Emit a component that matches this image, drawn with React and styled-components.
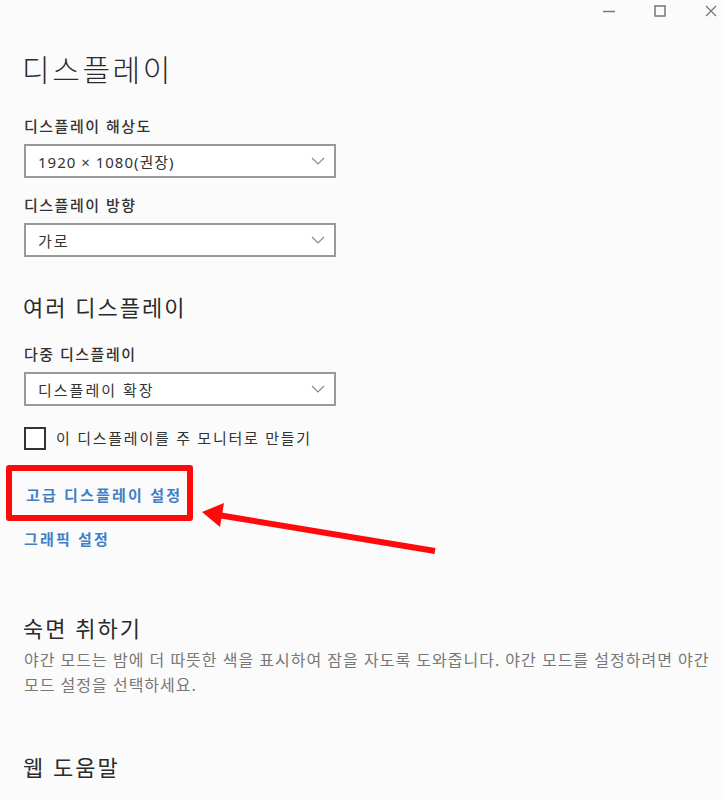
import styled, { createGlobalStyle } from 'styled-components'

const GlobalStyle = createGlobalStyle`
  html, body {
    margin: 0;
    padding: 0;
    background: #fbfbfb;
  }

  body {
    font-family: "Noto Sans", "Noto Sans CJK KR", sans-serif;
    color: #333333;
  }
`

function Chevron() {
  return (
    <svg width="14" height="8" viewBox="0 0 14 8" fill="none">
      <polyline points="1,1 7,7 13,1" stroke="#8a8a8a" strokeWidth="1.2" />
    </svg>
  )
}

function WindowControls() {
  return (
    <TitleBar>
      <svg width="12" height="12" viewBox="0 0 12 12">
        <line x1="0" y1="6.5" x2="12" y2="6.5" stroke="#777" strokeWidth="1.5" />
      </svg>
      <svg width="12" height="12" viewBox="0 0 12 12">
        <rect x="1" y="1" width="10" height="10" fill="none" stroke="#777" strokeWidth="1.5" />
      </svg>
      <svg width="12" height="12" viewBox="0 0 12 12">
        <path d="M1 1 L11 11 M11 1 L1 11" stroke="#777" strokeWidth="1.3" />
      </svg>
    </TitleBar>
  )
}

function Select({ value, $hangul }) {
  return (
    <SelectBox $hangul={$hangul}>
      <span>{value}</span>
      <Chevron />
    </SelectBox>
  )
}

function App() {
  return (
    <Page>
      <GlobalStyle />
      <WindowControls />

      <Title>디스플레이</Title>

      <FieldLabel $gap={26}>디스플레이 해상도</FieldLabel>
      <Select value="1920 × 1080(권장)" />

      <FieldLabel $gap={17}>디스플레이 방향</FieldLabel>
      <Select value="가로" $hangul />

      <SectionTitle $gap={35}>여러 디스플레이</SectionTitle>

      <FieldLabel $gap={22}>다중 디스플레이</FieldLabel>
      <Select value="디스플레이 확장" $hangul />

      <CheckRow>
        <CheckBox />
        <span>이 디스플레이를 주 모니터로 만들기</span>
      </CheckRow>

      <HighlightBox>
        <LinkText>고급 디스플레이 설정</LinkText>
      </HighlightBox>
      <LinkText $gap={8}>그래픽 설정</LinkText>

      <SectionTitle $gap={64}>숙면 취하기</SectionTitle>
      <Description>
        야간 모드는 밤에 더 따뜻한 색을 표시하여 잠을 자도록 도와줍니다. 야간 모드를 설정하려면 야간
        모드 설정을 선택하세요.
      </Description>

      <SectionTitle $gap={54}>웹 도움말</SectionTitle>

      <ArrowOverlay width="724" height="800" viewBox="0 0 724 800">
        <line x1="435" y1="551" x2="218" y2="515" stroke="#ff0a0a" strokeWidth="6" />
        <polygon points="202,512 224,503 220,527" fill="#ff0a0a" />
      </ArrowOverlay>
    </Page>
  )
}

const Page = styled.div`
  position: relative;
  width: 724px;
  min-height: 800px;
  box-sizing: border-box;
  padding: 0 12px 0 24px;
  overflow: hidden;
  background: #fbfbfb;
`

const TitleBar = styled.div`
  display: flex;
  align-items: center;
  justify-content: flex-end;
  gap: 39px;
  height: 22px;
  margin-right: -5px;
`

const Title = styled.h1`
  margin: 28px 0 0 -2px;
  font-size: 30px;
  font-weight: 300;
  line-height: 40px;
  letter-spacing: 2.6px;
  color: #2b2b2b;
`

const FieldLabel = styled.div`
  margin-top: ${({ $gap }) => $gap}px;
  font-size: 15px;
  font-weight: 500;
  line-height: 20px;
  letter-spacing: 1.5px;
  color: #333333;
`

const SelectBox = styled.div`
  display: flex;
  align-items: center;
  justify-content: space-between;
  width: 312px;
  height: 34px;
  box-sizing: border-box;
  margin-top: 8px;
  padding: 0 9px 0 12px;
  border: 2px solid #9a9a9a;
  background: #ffffff;
  font-size: 15px;
  letter-spacing: ${({ $hangul }) => ($hangul ? '2px' : '1px')};
  color: #333333;
`

const SectionTitle = styled.h2`
  margin: ${({ $gap }) => $gap}px 0 0 -1px;
  font-size: 22px;
  font-weight: 400;
  line-height: 30px;
  letter-spacing: 2px;
  color: #2b2b2b;
`

const CheckRow = styled.label`
  display: flex;
  align-items: center;
  gap: 10px;
  margin-top: 20px;
  font-size: 15px;
  line-height: 24px;
  letter-spacing: 1.75px;
  color: #333333;
`

const CheckBox = styled.span`
  width: 22px;
  height: 23px;
  box-sizing: border-box;
  border: 2px solid #333333;
  background: #ffffff;
`

const HighlightBox = styled.div`
  width: 187px;
  height: 56px;
  box-sizing: border-box;
  margin: 15px 0 0 -18px;
  padding: 14px 0 0 14px;
  border: 6px solid #ff0a0a;
  border-radius: 3px;
`

const LinkText = styled.div`
  margin-top: ${({ $gap = 0 }) => $gap}px;
  font-size: 15px;
  font-weight: 600;
  line-height: 20px;
  letter-spacing: 2.2px;
  color: #3f7fc6;
`

const Description = styled.p`
  margin: 5px -12px 0 0;
  font-size: 16px;
  line-height: 25px;
  letter-spacing: 1px;
  word-break: keep-all;
  color: #777777;
`

const ArrowOverlay = styled.svg`
  position: absolute;
  top: 0;
  left: 0;
  pointer-events: none;
`

export default App
